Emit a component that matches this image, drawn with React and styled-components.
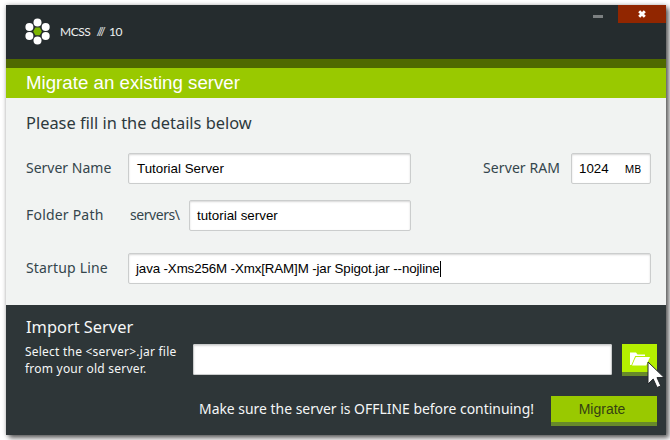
import React from 'react';
import styled, { createGlobalStyle } from 'styled-components';

const Global = createGlobalStyle`
  * { box-sizing: border-box; }
  body { margin: 0; background: #fff; overflow: hidden; }
`;

const Page = styled.div`
  width: 670px;
  height: 440px;
  padding: 5px 4px 5px 6px;
  background: #fff;
  font-family: 'Noto Sans', sans-serif;
`;

const Window = styled.main`
  position: relative;
  width: 660px;
  height: 430px;
  display: flex;
  flex-direction: column;
  box-shadow: 3px 3px 5px rgba(0, 0, 0, 0.6), 0 0 4px rgba(0, 0, 0, 0.25);
`;

const Header = styled.header`
  height: 63px;
  flex: none;
  display: flex;
  align-items: flex-start;
  background: #252c2e;
  border-bottom: 9px solid #4f6900;
`;

const Brand = styled.div`
  flex: 1;
  display: flex;
  align-items: center;
  gap: 9px;
  padding: 13px 0 0 19px;
`;

const BrandName = styled.span`
  display: flex;
  font: 12px/28px Lato, sans-serif;
  letter-spacing: -0.45px;
  color: #eef0f0;
`;

const Slashes = styled.span`
  margin: 0 4px 0 6px;
  letter-spacing: -0.8px;
`;

const Version = styled.span`
  letter-spacing: -0.3px;
`;

const Minimise = styled.button`
  width: 10px;
  height: 3px;
  margin: 10px 15px 0 0;
  padding: 0;
  border: 0;
  background: #7c8081;
`;

const Close = styled.button`
  width: 48px;
  height: 18px;
  padding: 0;
  border: 0;
  display: flex;
  align-items: center;
  justify-content: center;
  background: #912600;
`;

const TitleBar = styled.h1`
  flex: none;
  height: 30px;
  margin: 0;
  padding-left: 20px;
  background: #99c900;
  color: #fff;
  font: 400 18.7px/30px 'Liberation Sans', sans-serif;
`;

const Form = styled.section`
  flex: none;
  height: 207px;
  padding: 11px 15px 0 20px;
  background: #f1f3f2;
  color: #2d393d;
`;

const Heading = styled.h2`
  margin: 0;
  font-size: 16.4px;
  line-height: 27px;
  font-weight: 400;
`;

const Row = styled.div`
  display: flex;
  align-items: center;
  height: 31px;
  margin-top: ${(p) => p.$top}px;
`;

const Label = styled.label`
  width: ${(p) => p.$width}px;
  flex: none;
  font-size: 14px;
  line-height: 29px;
  padding-bottom: 2px;
  letter-spacing: ${(p) => p.$spacing || 0}px;
  color: #34454c;
  white-space: nowrap;
`;

const Field = styled.div`
  width: ${(p) => p.$width}px;
  height: 31px;
  flex: none;
  display: flex;
  align-items: center;
  justify-content: space-between;
  padding: 0 9px 0 ${(p) => p.$pad ?? 8}px;
  border: 1px solid #cbcdcd;
  border-radius: ${(p) => p.$radius ?? 2}px;
  background: #fff;
  box-shadow: inset 0 1px 2px rgba(0, 0, 0, 0.16);
  color: #000;
  font: 13.33px/29px 'Liberation Sans', sans-serif;
  white-space: nowrap;
`;

const Value = styled.span`
  letter-spacing: ${(p) => p.$spacing || 0}px;
  display: flex;
  align-items: center;
`;

const Caret = styled.span`
  width: 1px;
  height: 16px;
  background: #000;
`;

const Unit = styled.span`
  padding-top: 1px;
  font-family: 'Noto Sans', sans-serif;
  font-size: 10.5px;
  line-height: 28px;
`;

const Spacer = styled.div`
  flex: 1;
`;

const Footer = styled.footer`
  flex: 1;
  padding: 9px 9px 0 20px;
  background: #2e3638;
  color: #f5f7f7;
`;

const FooterHeading = styled(Heading)`
  line-height: 26px;
`;

const ImportRow = styled.div`
  display: flex;
  height: 32px;
  margin-top: 4px;
`;

const Hint = styled.p`
  width: 168px;
  flex: none;
  margin: -1px 0 0 -1px;
  font-size: 12px;
  letter-spacing: 0.22px;
  line-height: 17px;
  white-space: nowrap;
`;

const Browse = styled.button`
  width: 35px;
  height: 32px;
  margin-left: auto;
  padding: 5px 0 0 1px;
  border: 0;
  border-bottom: 4px solid #688a2a;
  background: #b5ef00;
`;

const ActionRow = styled.div`
  display: flex;
  align-items: center;
  justify-content: flex-end;
  gap: 17px;
  margin-top: 20px;
`;

const Warning = styled.span`
  font-size: 13.93px;
  line-height: 26px;
  margin-top: -4px;
`;

const Migrate = styled.button`
  width: 106px;
  height: 30px;
  padding: 0 4px 0 0;
  border: 0;
  border-bottom: 4px solid #688a2a;
  background: #99c900;
  color: #354112;
  font: 14px/26px 'Liberation Sans', sans-serif;
`;

const Pointer = styled.svg`
  position: absolute;
  left: 641px;
  top: 356px;
`;

const petals = [[12.5, 4.4], [20.7, 8.9], [20.7, 17.9], [12.5, 22.4], [4.4, 17.9], [4.4, 8.9]];

const Logo = () => (
  <svg width="26" height="28" viewBox="0 0 26 28">
    {petals.map(([x, y]) => (
      <circle key={`${x}-${y}`} cx={x} cy={y} r="4" fill="#fff" />
    ))}
    <path d="M10.4 9.5h4.3l2.2 3.9-2.2 3.9h-4.3l-2.2-3.9z" fill="#7cb500" />
  </svg>
);

export default function App() {
  return (
    <Page>
      <Global />
      <Window>
        <Header>
          <Brand>
            <Logo />
            <BrandName>MCSS<Slashes>///</Slashes><Version>10</Version></BrandName>
          </Brand>
          <Minimise aria-label="Minimise" />
          <Close aria-label="Close">
            <svg width="8" height="8" viewBox="0 0 8 8">
              <path d="M1.2 1.2 6.8 6.8M6.8 1.2 1.2 6.8" stroke="#fff" strokeWidth="2.8" />
            </svg>
          </Close>
        </Header>
        <TitleBar>Migrate an existing server</TitleBar>
        <Form>
          <Heading>Please fill in the details below</Heading>
          <Row $top={17}>
            <Label $width={102}>Server Name</Label>
            <Field $width={283}><Value>Tutorial Server</Value></Field>
            <Spacer />
            <Label $width={88} $spacing={0.1}>Server RAM</Label>
            <Field $width={80} $pad={7}><Value>1024</Value><Unit>MB</Unit></Field>
          </Row>
          <Row $top={16}>
            <Label $width={104} $spacing={0.2}>Folder Path</Label>
            <Label $width={59} $spacing={-0.45}>servers\</Label>
            <Field $width={222} $pad={7}><Value>tutorial server</Value></Field>
          </Row>
          <Row $top={22}>
            <Label $width={102} $spacing={0.17}>Startup Line</Label>
            <Field $width={523} $pad={7}>
              <Value $spacing={-0.12}>java -Xms256M -Xmx[RAM]M -jar Spigot.jar --nojline<Caret /></Value>
            </Field>
          </Row>
        </Form>
        <Footer>
          <FooterHeading>Import Server</FooterHeading>
          <ImportRow>
            <Hint>Select the &lt;server&gt;.jar file<br />from your old server.</Hint>
            <Field $width={419} $radius={1} />
            <Browse aria-label="Browse">
              <svg width="22" height="16" viewBox="0 0 22 16">
                <path d="M1 14V1.5h6l1.5 2H16V5H6.2L2.4 14z" fill="#fff" />
                <path d="M6.8 6H21l-3.8 8.5H3z" fill="#fff" />
              </svg>
            </Browse>
          </ImportRow>
          <ActionRow>
            <Warning>Make sure the server is OFFLINE before continuing!</Warning>
            <Migrate>Migrate</Migrate>
          </ActionRow>
        </Footer>
        <Pointer width="20" height="29" viewBox="0 0 20 29">
          <path d="M1 1v22l5.2-5 3.9 8.5 3.7-1.6-3.8-8.3h7.2z" fill="#fff" stroke="#24282b" strokeWidth="1" />
        </Pointer>
      </Window>
    </Page>
  );
}
